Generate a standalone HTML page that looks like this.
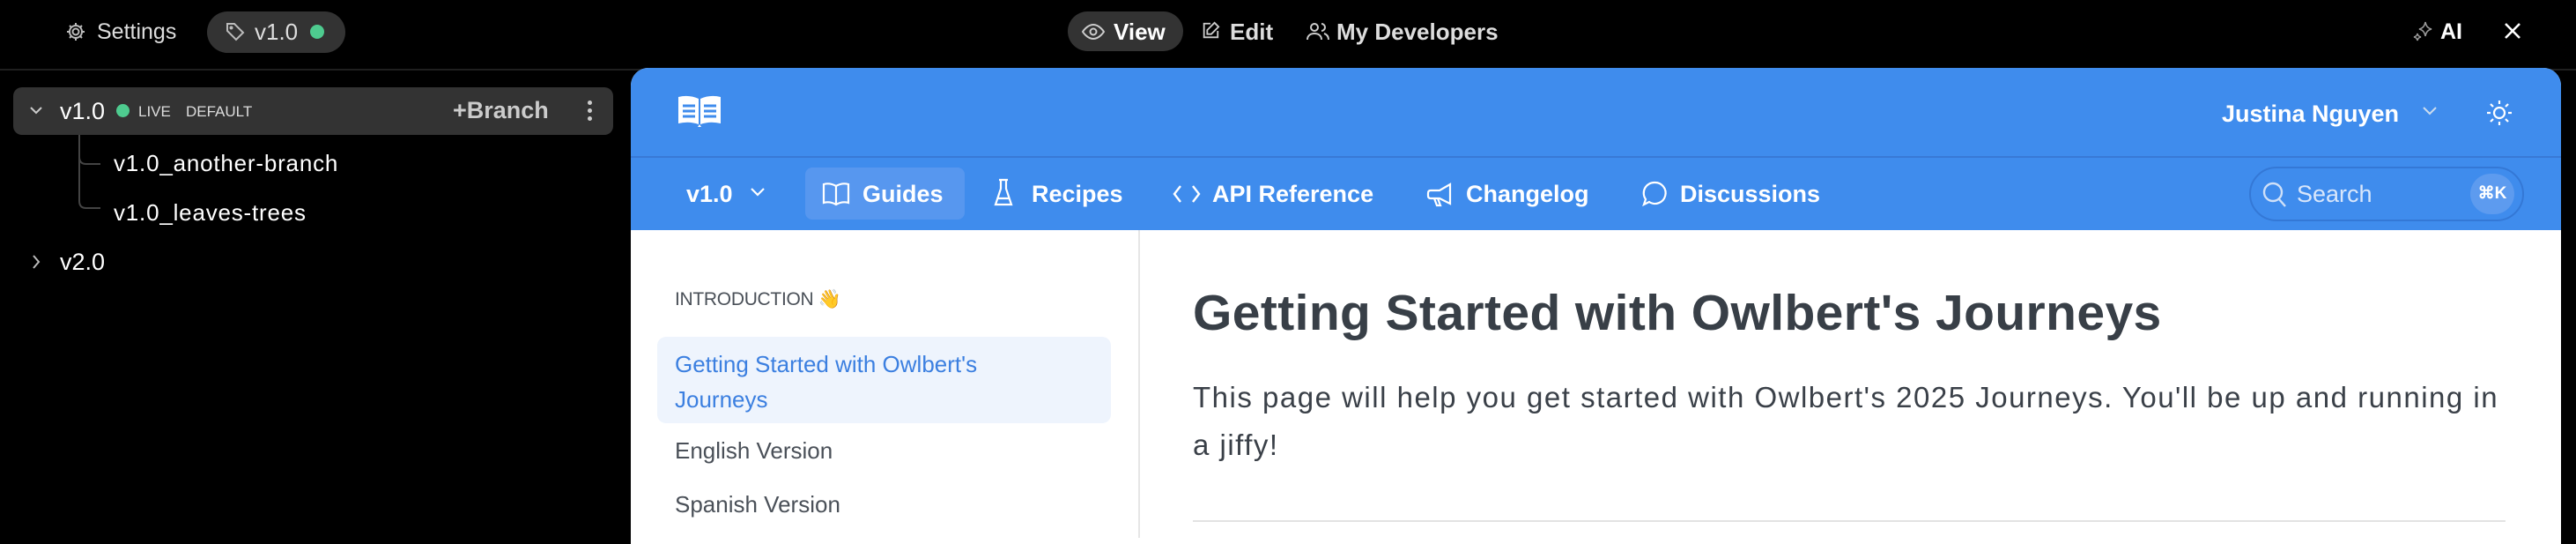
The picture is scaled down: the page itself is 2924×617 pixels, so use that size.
<!DOCTYPE html>
<html><head><meta charset="utf-8"><style>
*{margin:0;padding:0;box-sizing:border-box}
body{width:2924px;height:610px;background:#000;font-family:"Liberation Sans",sans-serif;position:relative;overflow:hidden;color:#fff}
.a{position:absolute;white-space:nowrap}
.t{line-height:1}
svg{position:absolute;overflow:visible}
</style></head><body>
<!-- top bar -->
<div class="a" style="left:0;top:78px;width:2924px;height:2px;background:#1f1f1f"></div>
<svg style="left:74px;top:24px" width="24" height="24" viewBox="0 0 24 24" fill="none" stroke="#bbb" stroke-width="2"><circle cx="12" cy="12" r="3.5"/><path d="M12 2v3M12 19v3M2 12h3M19 12h3M5 5l2 2M17 17l2 2M5 19l2-2M17 7l2-2"/><circle cx="12" cy="12" r="7"/></svg>
<div class="a t" style="left:110px;top:24px;font-size:25px;color:#ddd">Settings</div>
<div class="a" style="left:235px;top:13px;width:157px;height:47px;border-radius:24px;background:#333"></div>
<svg style="left:255px;top:24px" width="24" height="24" viewBox="0 0 24 24" fill="none" stroke="#bbb" stroke-width="2"><path d="M3 3h8l10 10-8 8L3 11z"/><circle cx="7.5" cy="7.5" r="1"/></svg>
<div class="a t" style="left:289px;top:23px;font-size:26px;color:#ddd">v1.0</div>
<div class="a" style="left:352px;top:28px;width:16px;height:16px;border-radius:50%;background:#4ecb8f"></div>

<div class="a" style="left:1212px;top:13px;width:131px;height:45px;border-radius:23px;background:#333"></div>
<svg style="left:1228px;top:24px" width="26" height="24" viewBox="0 0 26 24" fill="none" stroke="#ccc" stroke-width="2"><path d="M1 12s5-8 12-8 12 8 12 8-5 8-12 8S1 12 1 12z"/><circle cx="13" cy="12" r="3.5"/></svg>
<div class="a t" style="left:1264px;top:23px;font-size:26px;font-weight:bold;color:#fff">View</div>
<svg style="left:1363px;top:24px" width="22" height="22" viewBox="0 0 24 24" fill="none" stroke="#ccc" stroke-width="2"><path d="M12 3H4v17h17v-8"/><path d="M17 2l5 5-9 9H8v-5z"/></svg>
<div class="a t" style="left:1396px;top:23px;font-size:26px;font-weight:bold;color:#ddd">Edit</div>
<svg style="left:1483px;top:24px" width="26" height="22" viewBox="0 0 26 22" fill="none" stroke="#ccc" stroke-width="2"><circle cx="9" cy="7" r="4"/><path d="M1 21c0-5 4-7 8-7s8 2 8 7"/><path d="M17 3a4 4 0 010 8M20 14c3 1 5 3 5 7"/></svg>
<div class="a t" style="left:1517px;top:23px;font-size:26px;font-weight:bold;color:#ddd">My Developers</div>

<svg style="left:2738px;top:24px" width="26" height="24" viewBox="0 0 26 24" fill="none" stroke="#999" stroke-width="1.6"><path d="M15 1c1 5 3 7 7 8-4 1-6 3-7 8-1-5-3-7-7-8 4-1 6-3 7-8z"/><path d="M6 14c.5 2.5 1.5 3.5 4 4-2.5.5-3.5 1.5-4 4-.5-2.5-1.5-3.5-4-4 2.5-.5 3.5-1.5 4-4z"/></svg>
<div class="a t" style="left:2770px;top:24px;font-size:25px;font-weight:bold">AI</div>
<svg style="left:2842px;top:25px" width="20" height="20" viewBox="0 0 20 20" stroke="#fff" stroke-width="2.6"><path d="M2 2l16 16M18 2L2 18"/></svg>

<!-- sidebar -->
<div class="a" style="left:15px;top:99px;width:681px;height:54px;border-radius:10px;background:#333"></div>
<svg style="left:33px;top:119px" width="16" height="12" viewBox="0 0 16 12" fill="none" stroke="#ccc" stroke-width="2"><path d="M2 3l6 6 6-6"/></svg>
<div class="a t" style="left:68px;top:113px;font-size:27px">v1.0</div>
<div class="a" style="left:132px;top:118px;width:15px;height:15px;border-radius:50%;background:#4ecb8f"></div>
<div class="a t" style="left:157px;top:118px;font-size:17px;color:#ddd">LIVE</div>
<div class="a t" style="left:211px;top:118px;font-size:17px;color:#ddd">DEFAULT</div>
<div class="a t" style="left:514px;top:112px;font-size:27px;font-weight:bold;color:#ccc">+Branch</div>
<div class="a" style="left:667px;top:114px;width:5px;height:5px;border-radius:50%;background:#ccc"></div>
<div class="a" style="left:667px;top:123px;width:5px;height:5px;border-radius:50%;background:#ccc"></div>
<div class="a" style="left:667px;top:132px;width:5px;height:5px;border-radius:50%;background:#ccc"></div>
<svg style="left:88px;top:153px" width="30" height="90" viewBox="0 0 30 90" fill="none" stroke="#444" stroke-width="2"><path d="M2 0v25q0 8 8 8h16M2 25v50q0 8 8 8h16"/></svg>
<div class="a t" style="left:129px;top:172px;font-size:26px;letter-spacing:0.8px">v1.0_another-branch</div>
<div class="a t" style="left:129px;top:228px;font-size:26px;letter-spacing:0.8px">v1.0_leaves-trees</div>
<svg style="left:35px;top:288px" width="12" height="18" viewBox="0 0 12 18" fill="none" stroke="#bbb" stroke-width="2"><path d="M3 2l6 7-6 7"/></svg>
<div class="a t" style="left:68px;top:284px;font-size:27px">v2.0</div>

<!-- panel -->
<div class="a" style="left:716px;top:77px;width:2191px;height:540px;border-radius:20px 20px 0 0;background:#fff;overflow:hidden">
 <div style="position:absolute;left:0;top:0;width:100%;height:184px;background:#3f8ced"></div>
 <div style="position:absolute;left:0;top:100px;width:100%;height:2px;background:#3879d6"></div>
</div>
<svg style="left:770px;top:108px" width="48" height="36" viewBox="0 0 48 36"><path d="M0 2q12-3 23 2v29q-11-4-23-1z M25 4q11-5 23-2v30q-12-3-23 1z" fill="#fff"/><path d="M24 33l-2 3h4z" fill="#fff"/><path d="M5 12h14M5 18h14M5 24h14M29 12h14M29 18h14M29 24h14" stroke="#3f8ced" stroke-width="3"/></svg>
<div class="a t" style="left:2522px;top:116px;font-size:27px;font-weight:bold">Justina Nguyen</div>
<svg style="left:2750px;top:121px" width="16" height="10" viewBox="0 0 16 10" fill="none" stroke="#cde" stroke-width="2"><path d="M1 1l7 7 7-7"/></svg>
<svg style="left:2822px;top:113px" width="30" height="30" viewBox="0 0 30 30" fill="none" stroke="#fff" stroke-width="2.2"><circle cx="15" cy="15" r="6"/><path d="M15 1v4M15 25v4M1 15h4M25 15h4M5 5l3 3M22 22l3 3M5 25l3-3M22 8l3-3"/></svg>

<div class="a t" style="left:779px;top:207px;font-size:27px;font-weight:bold">v1.0</div>
<svg style="left:852px;top:213px" width="16" height="10" viewBox="0 0 16 10" fill="none" stroke="#fff" stroke-width="2.2"><path d="M1 1l7 7 7-7"/></svg>
<div class="a" style="left:914px;top:190px;width:181px;height:59px;border-radius:8px;background:#5797ef"></div>
<svg style="left:934px;top:207px" width="30" height="28" viewBox="0 0 30 28" fill="none" stroke="#fff" stroke-width="2.2"><path d="M1 2q7-2 14 2 7-4 14-2v21q-7-2-14 2-7-4-14-2z M15 4v21"/></svg>
<div class="a t" style="left:979px;top:207px;font-size:27px;font-weight:bold">Guides</div>
<svg style="left:1128px;top:203px" width="22" height="32" viewBox="0 0 22 32" fill="none" stroke="#fff" stroke-width="2.2"><path d="M6 1h10M8 1v10L2 29h18L14 11V1M4 22h14"/></svg>
<div class="a t" style="left:1171px;top:207px;font-size:27px;font-weight:bold">Recipes</div>
<svg style="left:1332px;top:209px" width="30" height="22" viewBox="0 0 30 22" fill="none" stroke="#fff" stroke-width="2.4"><path d="M8 2L1 11l7 9M22 2l7 9-7 9"/></svg>
<div class="a t" style="left:1376px;top:207px;font-size:27px;font-weight:bold">API Reference</div>
<svg style="left:1620px;top:207px" width="28" height="28" viewBox="0 0 28 28" fill="none" stroke="#fff" stroke-width="2.2"><path d="M26 2v22L14 18H4q-3 0-3-3v-3q0-3 3-3h10z M8 18l3 8h4l-3-8"/></svg>
<div class="a t" style="left:1664px;top:207px;font-size:27px;font-weight:bold">Changelog</div>
<svg style="left:1864px;top:205px" width="28" height="30" viewBox="0 0 28 30" fill="none" stroke="#fff" stroke-width="2.2"><path d="M14 2a12 12 0 11-6 22L2 27l2-6A12 12 0 0114 2z"/></svg>
<div class="a t" style="left:1907px;top:207px;font-size:27px;font-weight:bold">Discussions</div>

<div class="a" style="left:2553px;top:189px;width:312px;height:62px;border-radius:31px;border:2px solid #3478d6;background:#3f8ced"></div>
<svg style="left:2568px;top:206px" width="28" height="30" viewBox="0 0 28 30" fill="none" stroke="#cfe0f8" stroke-width="2.4"><circle cx="12" cy="12" r="10"/><path d="M19 20l7 8"/></svg>
<div class="a t" style="left:2607px;top:207px;font-size:27px;color:#d8e6fb">Search</div>
<div class="a t" style="left:2804px;top:197px;width:50px;height:46px;border-radius:23px;background:#5d9bef;font-size:19px;font-weight:bold;line-height:46px;text-align:center">⌘K</div>

<!-- content -->
<div class="a" style="left:1292px;top:261px;width:2px;height:349px;background:#e6e6e6"></div>
<div class="a t" style="left:766px;top:329px;font-size:21px;color:#4a5058;letter-spacing:-0.3px">INTRODUCTION 👋</div>
<div class="a" style="left:746px;top:382px;width:515px;height:98px;border-radius:10px;background:#eef4fd"></div>
<div class="a" style="left:766px;top:393px;font-size:26px;line-height:40px;color:#3b7fe0">Getting Started with Owlbert's<br>Journeys</div>
<div class="a t" style="left:766px;top:498px;font-size:26px;color:#4a5058">English Version</div>
<div class="a t" style="left:766px;top:559px;font-size:26px;color:#4a5058">Spanish Version</div>

<div class="a t" style="left:1354px;top:327px;font-size:57px;font-weight:bold;color:#383f47;letter-spacing:0.4px">Getting Started with Owlbert's Journeys</div>
<div class="a" style="left:1354px;top:424px;font-size:33px;line-height:54px;color:#3a4048;letter-spacing:1.5px">This page will help you get started with Owlbert's 2025 Journeys. You'll be up and running in<br>a jiffy!</div>
<div class="a" style="left:1354px;top:590px;width:1490px;height:2px;background:#e3e3e3"></div>
</body></html>
